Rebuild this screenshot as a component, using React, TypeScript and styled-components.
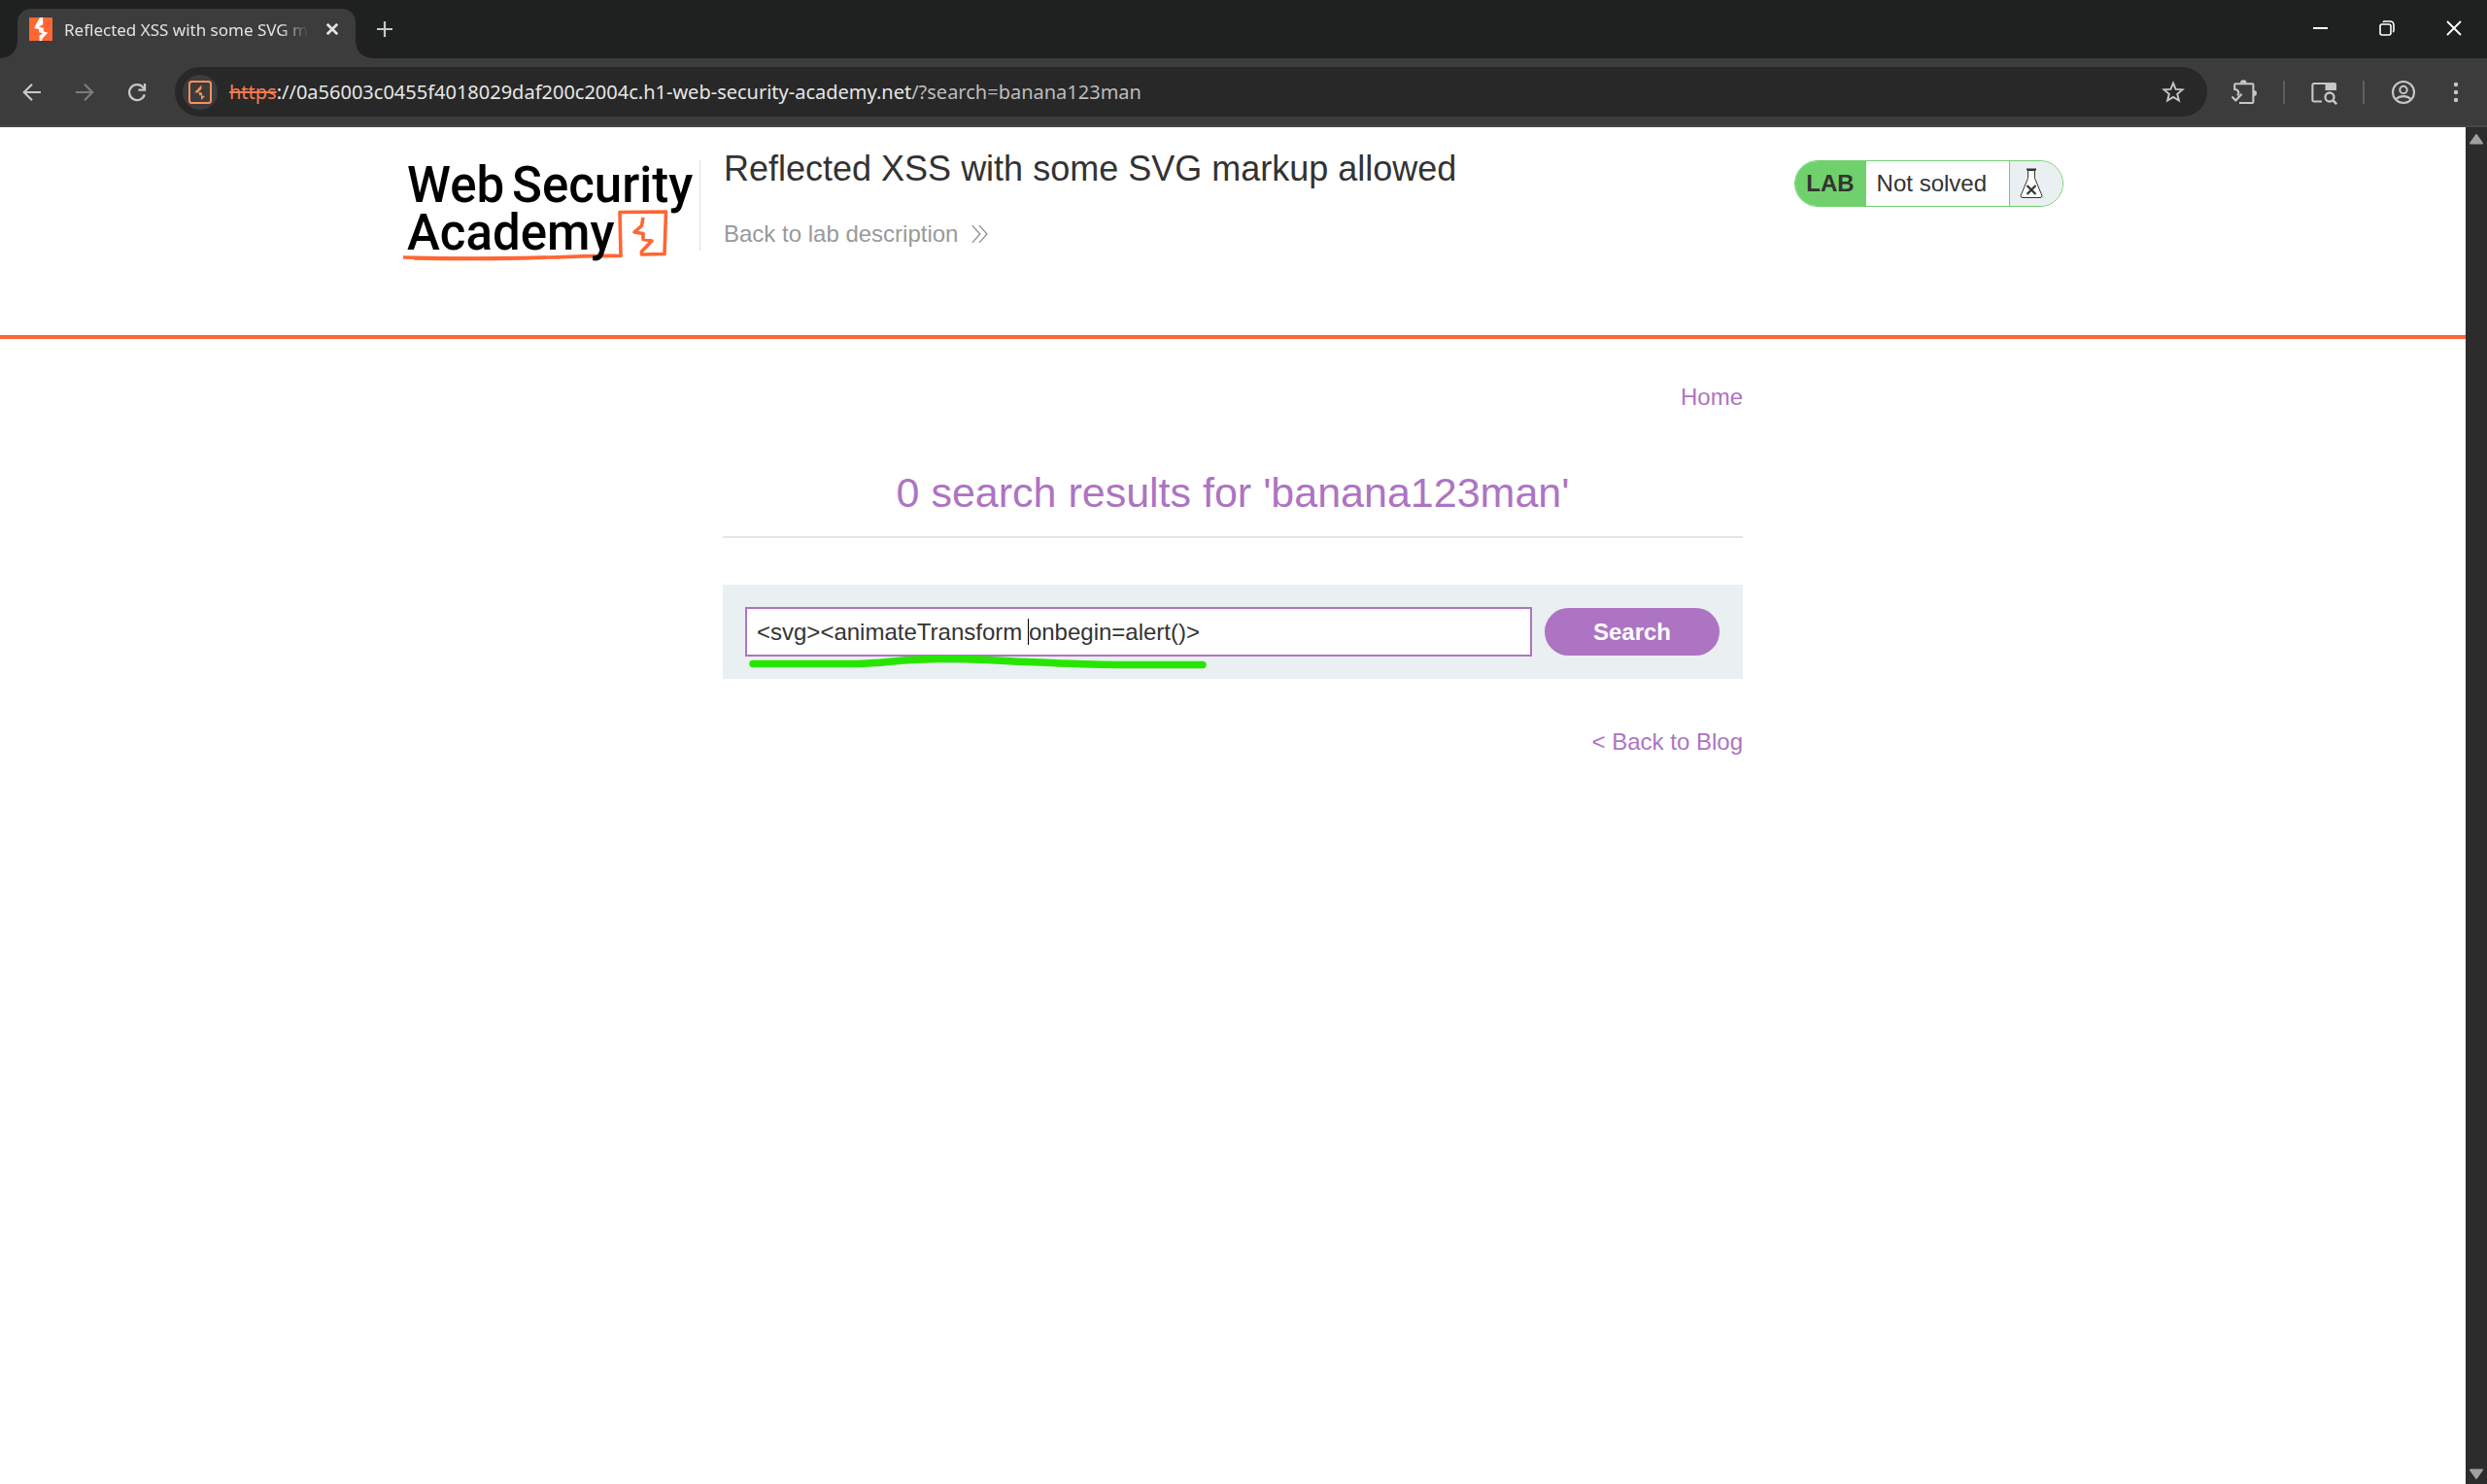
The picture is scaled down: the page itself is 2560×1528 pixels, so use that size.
import React from "react";
import styled, { createGlobalStyle } from "styled-components";

const GlobalStyle = createGlobalStyle`
  *, *::before, *::after { box-sizing: border-box; }
  body { margin: 0; background: #ffffff; }
  button, input { font: inherit; color: inherit; }
  a { text-decoration: none; }
`;

const uiFont = '"Noto Sans", "Open Sans", sans-serif';
const pageFont = '"Liberation Sans", Arial, sans-serif';

const Window = styled.div`
  display: flex;
  flex-direction: column;
  height: 100vh;
  font-family: ${uiFont};
`;

/* ---------- browser chrome ---------- */

const TabStrip = styled.div`
  display: flex;
  align-items: flex-end;
  height: 60px;
  padding-left: 18px;
  background: #1f2120;
`;

const Tab = styled.div`
  position: relative;
  display: flex;
  align-items: center;
  width: 348px;
  height: 51px;
  padding: 0 12px 9px;
  border-radius: 14px 14px 0 0;
  background: #3c3c3c;
  color: #e3e3e3;
  &::before,
  &::after {
    content: "";
    position: absolute;
    bottom: 0;
    width: 16px;
    height: 16px;
  }
  &::before {
    right: 100%;
    background: radial-gradient(circle at 0 0, transparent 15px, #3c3c3c 16px);
  }
  &::after {
    left: 100%;
    background: radial-gradient(circle at 100% 0, transparent 15px, #3c3c3c 16px);
  }
`;

const TabTitle = styled.span`
  flex: 1;
  min-width: 0;
  margin: 2px 12px 0 12px;
  overflow: hidden;
  white-space: nowrap;
  font-size: 17px;
  line-height: 26px;
  mask-image: linear-gradient(to right, #000 calc(100% - 30px), transparent);
`;

const IconButton = styled.button<{ $w?: number; $h?: number }>`
  display: flex;
  align-items: center;
  justify-content: center;
  flex: none;
  width: ${(p) => p.$w ?? 36}px;
  height: ${(p) => p.$h ?? 36}px;
  padding: 0;
  border: 0;
  border-radius: 18px;
  background: transparent;
  color: #c7c7c7;
  &:disabled {
    color: #7c7c7c;
  }
`;

const CloseTab = styled(IconButton)`
  color: #e3e3e3;
`;

const NewTab = styled(IconButton)`
  margin: 0 auto 12px 12px;
`;

const WindowControls = styled.div`
  display: flex;
  align-self: flex-start;
  button {
    color: #ffffff;
    border-radius: 0;
  }
`;

const Toolbar = styled.div`
  display: flex;
  align-items: center;
  height: 71px;
  padding: 0 14px 0 15px;
  border-bottom: 2px solid #474747;
  background: #3c3c3c;
`;

const NavButtons = styled.div`
  display: flex;
  gap: 18px;
  margin-right: 21px;
`;

const Omnibox = styled.div`
  display: flex;
  align-items: center;
  flex: 1;
  min-width: 0;
  height: 51px;
  padding: 0 17px 0 8px;
  border-radius: 26px;
  background: #282828;
`;

const SiteButton = styled(IconButton)`
  background: #3c3c3c;
`;

const Url = styled.div`
  flex: 1;
  min-width: 0;
  margin: 0 12px;
  overflow: hidden;
  white-space: nowrap;
  font-size: 20px;
  line-height: 28px;
  color: #e6e6e6;
`;

const Scheme = styled.s`
  color: #fa7a4e;
`;

const Query = styled.span`
  color: #bdbdbd;
`;

const Actions = styled.div`
  display: flex;
  align-items: center;
  margin-left: 20px;
`;

const Separator = styled.span`
  width: 2px;
  height: 24px;
  margin: 0 22px;
  background: #5e5e5e;
`;

const MenuButton = styled(IconButton)`
  margin-left: 18px;
`;

/* ---------- page ---------- */

const Viewport = styled.div`
  display: flex;
  flex: 1;
  min-height: 0;
`;

const Page = styled.div`
  flex: 1;
  min-width: 0;
  overflow: hidden;
  background: #ffffff;
  font-family: ${pageFont};
  font-size: 24px;
  line-height: 28px;
  color: #333332;
`;

const Scrollbar = styled.div`
  display: flex;
  flex-direction: column;
  justify-content: space-between;
  align-items: center;
  width: 22px;
  padding: 6px 0 4px;
  background: #2c2c2c;
`;

const Header = styled.header`
  padding: 22px 0 75px;
  border-bottom: 4px solid #ff6633;
`;

const HeaderInner = styled.div`
  display: flex;
  align-items: flex-start;
  max-width: 1710px;
  margin: 0 auto;
`;

const LogoLink = styled.a`
  display: flex;
  margin-top: 12px;
`;

const Divider = styled.span`
  width: 1px;
  height: 93px;
  margin-top: 12px;
  background: #e2e2e2;
`;

const TitleBlock = styled.div`
  flex: 1;
  display: flex;
  flex-direction: column;
  align-items: flex-start;
  gap: 32px;
  padding-left: 24px;
`;

const LabTitle = styled.h2`
  margin: 0;
  font-size: 36px;
  line-height: 42px;
  font-weight: 400;
`;

const LabLink = styled.a`
  display: flex;
  align-items: center;
  gap: 14px;
  color: #999999;
`;

const Badge = styled.div`
  display: flex;
  height: 48px;
  margin-top: 12px;
  border: 1px solid #70d16c;
  border-radius: 24px;
  overflow: hidden;
`;

const BadgeLabel = styled.span`
  display: flex;
  align-items: center;
  padding: 0 12px 0 11px;
  background: #70d16c;
  font-weight: 700;
`;

const BadgeStatus = styled.span`
  display: flex;
  align-items: center;
  padding: 0 23px 0 11px;
`;

const BadgeIcon = styled.span`
  display: flex;
  align-items: center;
  width: 55px;
  padding-left: 9px;
  border-left: 1px solid #70d16c;
  background: #eaeff2;
`;

const Main = styled.main`
  display: flex;
  flex-direction: column;
  max-width: 1050px;
  margin: 0 auto;
  padding-top: 46px;
`;

const TextLink = styled.a`
  align-self: flex-end;
  color: #ad74c3;
`;

const ResultTitle = styled.h1`
  margin: 60px 0 0;
  padding-bottom: 21px;
  border-bottom: 2px solid #e5e5e5;
  color: #ad74c3;
  font-size: 43px;
  line-height: 48px;
  font-weight: 400;
  text-align: center;
`;

const SearchForm = styled.form`
  display: flex;
  align-items: center;
  gap: 13px;
  margin: 48px 0 51px;
  padding: 23px 24px 23px 23px;
  background: #eaeff2;
`;

const Field = styled.div`
  position: relative;
  flex: 1;
`;

const SearchInput = styled.input`
  display: block;
  width: 100%;
  height: 51px;
  padding: 0 10px;
  border: 2px solid #ad74c3;
  border-radius: 0;
  background: #ffffff;
  outline: none;
`;

const Caret = styled.span`
  position: absolute;
  left: 291px;
  top: 12px;
  width: 1px;
  height: 27px;
  background: #000000;
`;

const Marker = styled.svg`
  position: absolute;
  left: 2px;
  top: 46px;
  pointer-events: none;
`;

const SearchButton = styled.button`
  width: 180px;
  height: 49px;
  padding: 0;
  border: 0;
  border-radius: 25px;
  background: #ad74c3;
  color: #ffffff;
  font-weight: 700;
`;

/* ---------- drawings ---------- */

const Favicon = () => (
  <svg width="24" height="24" viewBox="0 0 24 24" aria-hidden="true">
    <rect width="24" height="24" fill="#ff6633" />
    <path
      d="M11 0h3.200v7.200L10 9.800l4.800 1v3.400l4.400 1.600L13.400 22v2h-2.800v-5.600l3.400-2-4-1.400v-3L5 11z"
      fill="#fff"
    />
  </svg>
);

const Back = () => (
  <svg width="20" height="20" viewBox="0 0 20 20" fill="none" stroke="currentColor" strokeWidth="2.2">
    <path d="M19 10H2.5M10 1.8 1.8 10l8.2 8.2" />
  </svg>
);

const Forward = () => (
  <svg width="20" height="20" viewBox="0 0 20 20" fill="none" stroke="currentColor" strokeWidth="2.2">
    <path d="M1 10h16.5M10 1.8l8.2 8.2-8.2 8.2" />
  </svg>
);

const Reload = () => (
  <svg width="20" height="20" viewBox="0 0 20 20" fill="none" stroke="currentColor" strokeWidth="2.3">
    <path d="M17.8 12.4A8 8 0 1 1 16.6 5.4L18 7" />
    <path d="M18 1v6.6h-6.6" />
  </svg>
);

const SiteIcon = () => (
  <svg width="24" height="24" viewBox="0 0 24 24" fill="none" stroke="#ff8f5e">
    <rect x="1" y="1" width="22" height="22" rx="2.5" strokeWidth="2" />
    <path
      d="M13.400 4.500v4.300l-3.400 3 4 .6v2.800l2.800 1L13 20v-3.600l.6-.8-2.600-.6v-2.400l-4.800-.4z"
      fill="#ff8f5e"
      stroke="none"
    />
  </svg>
);

const Star = () => (
  <svg width="24" height="24" viewBox="0 0 24 24" fill="none" stroke="currentColor" strokeWidth="1.9">
    <path d="m12 2.500 2.600 6.400 6.900.5-5.300 4.400 1.700 6.700-5.900-3.600-5.900 3.600 1.700-6.700-5.300-4.400 6.900-.5z" />
  </svg>
);

const Extensions = () => (
  <svg width="28" height="28" viewBox="0 0 28 28" fill="none" stroke="currentColor" strokeWidth="2.1">
    <path d="M9 25h13.400a1 1 0 0 0 1-1V6.200a1 1 0 0 0-1-1H5.200a1 1 0 0 0-1 1V11c5 .3 5 5.500 2.500 6" />
    <path d="m1.500 18.500 3.800 4 6.200-6.800" />
    <path d="M10 4.500a3.300 3.300 0 0 1 6.600 0zM24 12a3 3 0 0 1 0 6z" fill="currentColor" stroke="none" />
  </svg>
);

const TabSearch = () => (
  <svg width="28" height="28" viewBox="0 0 28 28" fill="none" stroke="currentColor" strokeWidth="2.1">
    <path d="M12 23.500H4a1.600 1.600 0 0 1-1.600-1.600V6.600A1.600 1.600 0 0 1 4 5h20" />
    <path d="M15.500 4H25a2 2 0 0 1 2 2v6H15.500z" fill="currentColor" stroke="none" />
    <circle cx="20" cy="19" r="4.500" strokeWidth="2.300" />
    <path d="m23.200 22.200 4 4" strokeWidth="2.600" />
  </svg>
);

const Profile = () => (
  <svg width="26" height="26" viewBox="0 0 26 26" fill="none" stroke="currentColor" strokeWidth="2.1">
    <circle cx="13" cy="13" r="11" />
    <circle cx="13" cy="10.500" r="3.700" />
    <path d="M5 20.300c4.500-4.200 11.500-4.200 16 0" />
  </svg>
);

const Dots = () => (
  <svg width="6" height="24" viewBox="0 0 6 24" fill="currentColor">
    <circle cx="3" cy="4" r="2.200" />
    <circle cx="3" cy="12" r="2.200" />
    <circle cx="3" cy="20" r="2.200" />
  </svg>
);

const Cross = ({ size, weight }: { size: number; weight: number }) => (
  <svg width={size} height={size} viewBox="0 0 16 16" fill="none" stroke="currentColor" strokeWidth={weight}>
    <path d="m1 1 14 14M15 1 1 15" />
  </svg>
);

const Logo = () => (
  <svg width="306" height="105" viewBox="0 0 306 105" role="img" aria-label="Web Security Academy">
    <g fill="none" stroke="#ff6633" strokeLinejoin="round">
      <path
        d="M1 100C60 101.500 111 101 151 100C180 99.200 205 98 225 98.500L224 53.500L271.500 53L270 96.500L246.500 97V94L257 83L248 81.500V75.500L239 74L246.500 67.500L248 59"
        strokeWidth="3.600"
      />
      <path d="M12 101c52 1 104 .4 136-.8" strokeWidth="3.600" />
    </g>
    <g fontFamily="Roboto, sans-serif" fontWeight="500" fontSize="51" fill="#000">
      <text x="5" y="43">Web</text>
      <text x="113" y="43">Security</text>
      <text x="5" y="92">Academy</text>
    </g>
  </svg>
);

const Chevrons = () => (
  <svg width="17" height="20" viewBox="0 0 17 20" fill="none" stroke="#888" strokeWidth="1.200">
    <path d="m.8 1.200 8 8.800-8 8.800M8 1.200l8 8.800-8 8.800" />
  </svg>
);

const Flask = () => (
  <svg width="26" height="32" viewBox="0 0 26 32" fill="none" stroke="#333332">
    <path d="M9.500 2.500v8L2 28.500q0 2 2 2h18q2 0 2-2L16.500 10.500v-8z" fill="#fff" strokeWidth="1" />
    <path d="M8 1.500h10" strokeWidth="2" />
    <path d="m8.500 18 9 9M17.500 18l-9 9" strokeWidth="2.200" />
  </svg>
);

const Arrow = ({ down }: { down?: boolean }) => (
  <svg width="16" height="12" viewBox="0 0 16 12">
    <path
      d={down ? "M2 1.500h12L8 10z" : "M2 10.500h12L8 2z"}
      fill="#a0a0a0"
      stroke="#a0a0a0"
      strokeWidth="2"
      strokeLinejoin="round"
    />
  </svg>
);

export default function App() {
  return (
    <Window>
      <GlobalStyle />
      <TabStrip>
        <Tab>
          <Favicon />
          <TabTitle>Reflected XSS with some SVG markup allowed</TabTitle>
          <CloseTab $w={24} $h={24} aria-label="Close tab">
            <Cross size={12} weight={3.6} />
          </CloseTab>
        </Tab>
        <NewTab aria-label="New tab">
          <svg width="16" height="16" viewBox="0 0 16 16" stroke="currentColor" strokeWidth="2.200">
            <path d="M8 0v16M0 8h16" />
          </svg>
        </NewTab>
        <WindowControls>
          <IconButton $w={69} $h={58} aria-label="Minimize">
            <svg width="15" height="2" viewBox="0 0 15 2">
              <path d="M0 0h15v2H0z" fill="currentColor" />
            </svg>
          </IconButton>
          <IconButton $w={68} $h={58} aria-label="Restore">
            <svg width="16" height="16" viewBox="0 0 16 16" fill="none" stroke="currentColor" strokeWidth="1.600">
              <rect x="1" y="4" width="11" height="11" rx="2" />
              <path d="M4 2q.5-1 2-1h5q4 0 4 4v5q0 1.500-1 2" />
            </svg>
          </IconButton>
          <IconButton $w={69} $h={58} aria-label="Close">
            <Cross size={16} weight={1.8} />
          </IconButton>
        </WindowControls>
      </TabStrip>

      <Toolbar>
        <NavButtons>
          <IconButton aria-label="Back"><Back /></IconButton>
          <IconButton aria-label="Forward" disabled><Forward /></IconButton>
          <IconButton aria-label="Reload"><Reload /></IconButton>
        </NavButtons>
        <Omnibox>
          <SiteButton aria-label="View site information"><SiteIcon /></SiteButton>
          <Url role="textbox" aria-label="Address bar" tabIndex={0}>
            <Scheme>https</Scheme>://0a56003c0455f4018029daf200c2004c.h1-web-security-academy.net
            <Query>/?search=banana123man</Query>
          </Url>
          <IconButton aria-label="Bookmark this tab"><Star /></IconButton>
        </Omnibox>
        <Actions>
          <IconButton aria-label="Extensions"><Extensions /></IconButton>
          <Separator />
          <IconButton aria-label="Search tabs"><TabSearch /></IconButton>
          <Separator />
          <IconButton aria-label="Profile"><Profile /></IconButton>
          <MenuButton aria-label="Menu"><Dots /></MenuButton>
        </Actions>
      </Toolbar>

      <Viewport>
        <Page>
          <Header>
            <HeaderInner>
              <LogoLink href="#"><Logo /></LogoLink>
              <Divider />
              <TitleBlock>
                <LabTitle>Reflected XSS with some SVG markup allowed</LabTitle>
                <LabLink href="#">
                  Back to lab description <Chevrons />
                </LabLink>
              </TitleBlock>
              <Badge>
                <BadgeLabel>LAB</BadgeLabel>
                <BadgeStatus>Not solved</BadgeStatus>
                <BadgeIcon><Flask /></BadgeIcon>
              </Badge>
            </HeaderInner>
          </Header>
          <Main>
            <TextLink href="#">Home</TextLink>
            <ResultTitle>0 search results for 'banana123man'</ResultTitle>
            <SearchForm onSubmit={(e) => e.preventDefault()}>
              <Field>
                <SearchInput
                  type="text"
                  aria-label="Search the blog"
                  defaultValue="<svg><animateTransform onbegin=alert()>"
                  spellCheck={false}
                />
                <Caret />
                <Marker width="480" height="20" viewBox="0 0 480 20" fill="none">
                  <path
                    d="M6 12.500H112C145 12 155 7.500 200 7.500S250 9 275 10s70 3.500 105 3.500h89"
                    stroke="#26e600"
                    strokeWidth="7.500"
                    strokeLinecap="round"
                  />
                </Marker>
              </Field>
              <SearchButton type="submit">Search</SearchButton>
            </SearchForm>
            <TextLink href="#">&lt; Back to Blog</TextLink>
          </Main>
        </Page>
        <Scrollbar>
          <Arrow />
          <Arrow down />
        </Scrollbar>
      </Viewport>
    </Window>
  );
}
